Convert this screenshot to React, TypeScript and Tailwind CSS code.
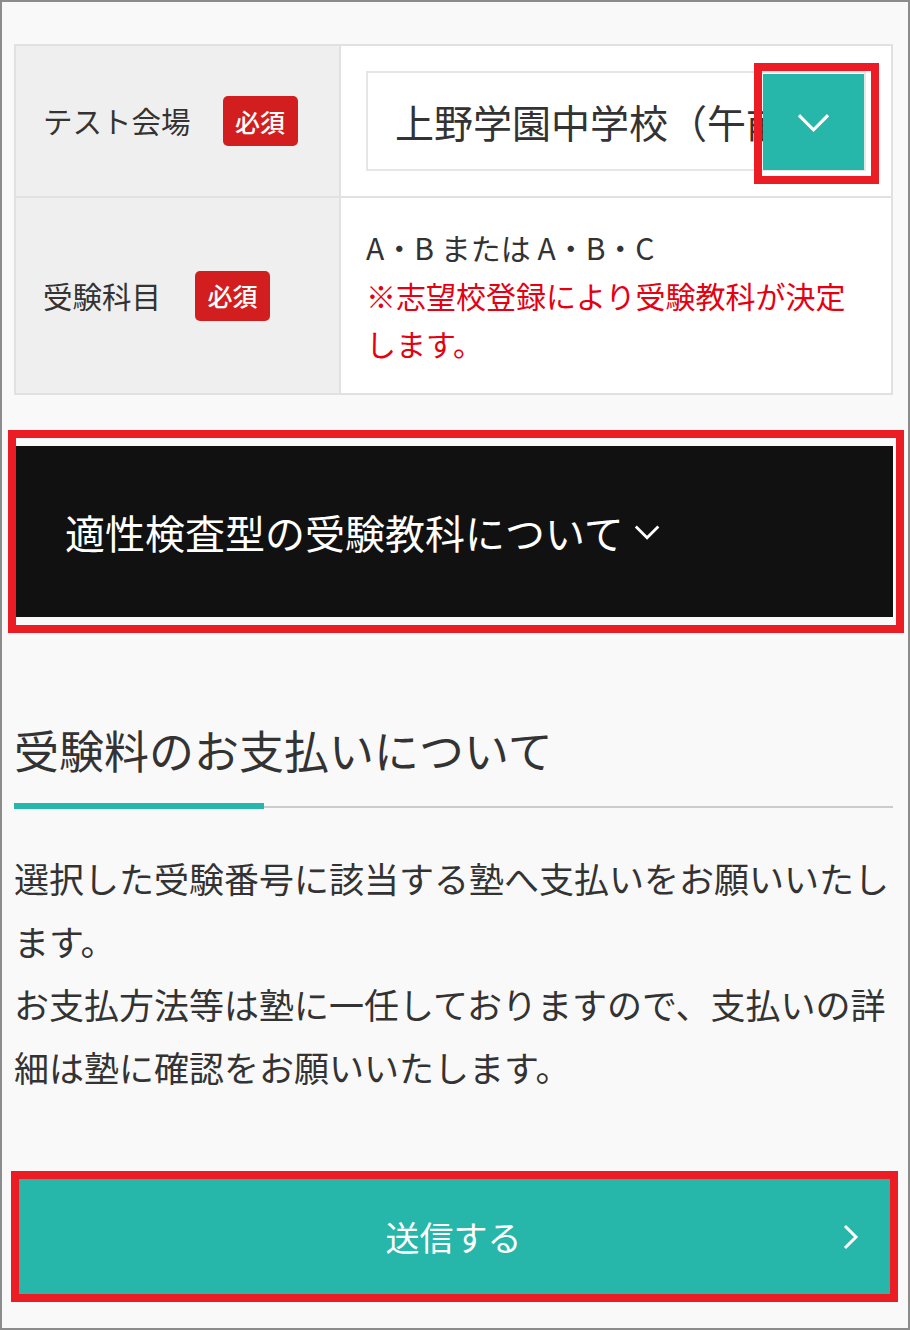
const font = "font-['Noto_Sans_CJK_JP','Noto_Sans',sans-serif]";

function Badge() {
  return (
    <span className="inline-flex h-[50px] w-[75px] items-center justify-center rounded-[5px] bg-[#d21e1e] text-[25px] font-medium leading-none text-white">
      必須
    </span>
  );
}

// 赤枠（注釈）
function Highlight({ className }: { className: string }) {
  return <div className={`pointer-events-none absolute border-[8px] border-[#ec1c24] ${className}`} />;
}

function Chevron({ className, points }: { className: string; points: string }) {
  return (
    <svg className={className} viewBox="0 0 30 30" fill="none" stroke="currentColor" strokeWidth={3} strokeLinecap="square">
      <polyline points={points} />
    </svg>
  );
}

export default function App() {
  return (
    <div
      className={`${font} relative h-[1330px] w-[910px] overflow-hidden border-2 border-[#8c8c8c] bg-[#f9f9f9] pl-[12px] pr-[15px] pt-[42px] text-[#333]`}
    >
      {/* フォーム表 */}
      <div className="border-2 border-[#e1e1e1] bg-white">
        <div className="flex h-[152px] border-b-2 border-[#e1e1e1]">
          <div className="flex w-[325px] shrink-0 items-center gap-[32px] border-r-2 border-[#e1e1e1] bg-[#efefef] pl-[27px]">
            <span className="text-[29.5px] leading-none">テスト会場</span>
            <Badge />
          </div>
          <div className="flex-1 p-[25px]">
            <div className="relative flex h-[100px] items-center overflow-hidden border-2 border-[#e6e6e6] bg-white pl-[27px]">
              <span className="whitespace-nowrap text-[39px] leading-none">上野学園中学校（午前）</span>
            </div>
          </div>
        </div>
        <div className="flex h-[195px]">
          <div className="flex w-[325px] shrink-0 items-center gap-[34px] border-r-2 border-[#e1e1e1] bg-[#efefef] pl-[27px]">
            <span className="text-[29.5px] leading-none">受験科目</span>
            <Badge />
          </div>
          <div className="flex-1 py-[25px] pl-[25px] pr-[40px] text-[30px] leading-[48px]">
            <p>A・B または A・B・C</p>
            <p className="text-[#e50012]">※志望校登録により受験教科が決定します。</p>
          </div>
        </div>
      </div>

      {/* セレクトボタン（表の上に重ねる） */}
      <div className="absolute left-[761px] top-[72px] flex h-[96px] w-[101px] items-center justify-center bg-[#26b7aa] text-white">
        <Chevron className="h-[31px] w-[31px]" points="2,9 15,22 28,9" />
        <Highlight className="-bottom-[14px] -left-[9px] -right-[15px] -top-[11px]" />
      </div>

      {/* アコーディオン */}
      <div className="relative mt-[51px] flex h-[171px] items-center bg-[#111] pl-[51px] text-white">
        <span className="text-[40px] leading-none">適性検査型の受験教科について</span>
        <Chevron className="ml-[10px] mt-[2px] h-[28px] w-[28px]" points="3,9 14,20 25,9" />
        <Highlight className="-bottom-[16px] -left-[6px] -right-[11px] -top-[16px]" />
      </div>

      {/* 受験料 */}
      <h2 className="mt-[100px] text-[45px] font-normal leading-[66px] text-[#333]">受験料のお支払いについて</h2>
      <div className="mt-[20px] flex items-end">
        <div className="h-[6px] w-[250px] bg-[#26b7aa]" />
        <div className="mb-[1px] h-[2px] flex-1 bg-[#cccccc]" />
      </div>
      <p className="mt-[37px] text-[35px] leading-[63px] text-[#333]">
        選択した受験番号に該当する塾へ支払いをお願いいたします。
        <br />
        お支払方法等は塾に一任しておりますので、支払いの詳細は塾に確認をお願いいたします。
      </p>

      {/* 送信 */}
      <button
        type="button"
        className="relative mt-[77px] flex h-[123px] w-full items-center justify-center bg-[#26b7aa] text-[34px] leading-none text-white"
      >
        送信する
        <Chevron className="absolute right-[27px] top-1/2 h-[30px] w-[30px] -translate-y-1/2" points="10,5 20,15 10,25" />
        <Highlight className="-bottom-[4px] -left-[3px] -right-[5px] -top-[4px]" />
      </button>
    </div>
  );
}
